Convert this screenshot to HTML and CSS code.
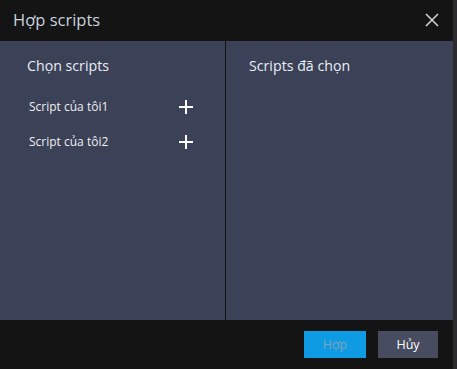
FILE: index.html
```html
<!DOCTYPE html>
<html lang="vi">
<head>
    <meta charset="UTF-8">
    <title>Hợp scripts</title>
    <link rel="stylesheet" href="styles.css">
</head>
<body>
    <div class="dialog">
        <div class="header">
            <div class="title">Hợp scripts</div>
            <svg class="close" width="14" height="14" viewBox="0 0 14 14">
                <path d="M1 1 L13 13 M13 1 L1 13" stroke="#d0d0d0" stroke-width="1.6" fill="none"/>
            </svg>
        </div>
        <div class="main">
            <div class="panel left">
                <div class="panel-title">Chọn scripts</div>
                <div class="row">
                    <span>Script của tôi1</span>
                    <svg class="plus" width="14" height="14" viewBox="0 0 14 14">
                        <path d="M7 0 V14 M0 7 H14" stroke="#fff" stroke-width="2" fill="none"/>
                    </svg>
                </div>
                <div class="row">
                    <span>Script của tôi2</span>
                    <svg class="plus" width="14" height="14" viewBox="0 0 14 14">
                        <path d="M7 0 V14 M0 7 H14" stroke="#fff" stroke-width="2" fill="none"/>
                    </svg>
                </div>
            </div>
            <div class="panel right">
                <div class="panel-title">Scripts đã chọn</div>
            </div>
        </div>
        <div class="footer">
            <button class="btn ok">Hợp</button>
            <button class="btn cancel">Hủy</button>
        </div>
    </div>
</body>
</html>
```

FILE: styles.css
```css
* {
    box-sizing: border-box;
}

body {
    margin: 0;
    background-color: #141414;
    font-family: "Open Sans", "Noto Sans", sans-serif;
}

.dialog {
    width: 457px;
    height: 369px;
    border-right: 4px solid #2b2b2d;
    display: flex;
    flex-direction: column;
}

.header {
    height: 41px;
    display: flex;
    align-items: center;
    justify-content: space-between;
    padding: 0 14px 0 13px;
}

.title {
    color: #c9d2de;
    font-size: 16.5px;
    margin-top: -2px;
}

.close {
    margin-top: -2px;
}

.main {
    height: 279px;
    display: flex;
    background-color: #3b4157;
}

.panel {
    padding-top: 15px;
}

.left {
    width: 226px;
    border-right: 1px solid #111;
    padding-left: 27px;
    padding-right: 32px;
}

.right {
    flex: 1;
    padding-left: 23px;
}

.panel-title {
    color: #e8eef6;
    font-size: 14.2px;
    height: 20px;
}

.row {
    display: flex;
    align-items: center;
    justify-content: space-between;
    color: #f0f0f0;
    font-size: 12px;
    padding-left: 2px;
    height: 35px;
}

.left .panel-title + .row {
    margin-top: 13px;
}

.footer {
    flex: 1;
    display: flex;
    justify-content: flex-end;
    align-items: flex-start;
    gap: 12px;
    padding-top: 11px;
    padding-right: 15px;
}

.btn {
    width: 62px;
    height: 27px;
    border: none;
    font-family: inherit;
    font-size: 12.5px;
    padding: 0;
}

.ok {
    background-color: #0f9be3;
    color: #7fa3b9;
}

.cancel {
    width: 60px;
    background-color: #474c61;
    color: #ffffff;
}
```
